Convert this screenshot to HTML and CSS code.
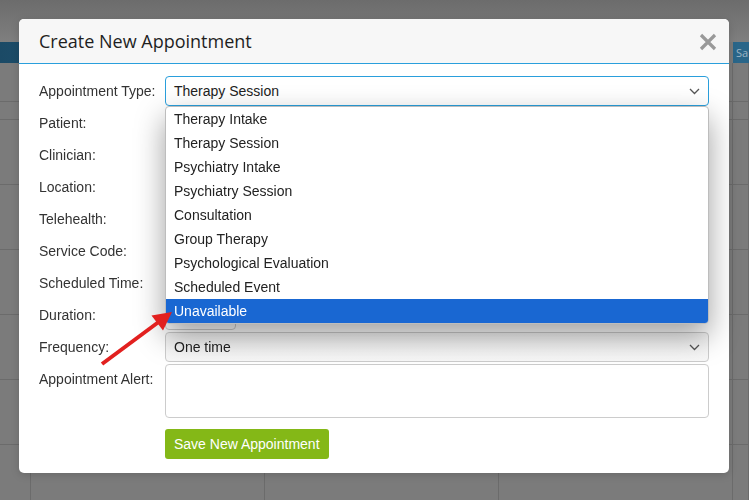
FILE: index.html
```html
<!DOCTYPE html>
<html lang="en">
<head>
<meta charset="utf-8">
<title>Create New Appointment</title>
<link rel="stylesheet" href="styles.css">
</head>
<body>
<div class="page">
  <div class="topbar"></div>
  <div class="toolbar">
    <span class="tb-btn tb-left"></span>
    <span class="tb-gap"></span>
    <span class="tb-btn tb-right">Sa</span>
  </div>
  <div class="calendar">
    <div class="cal-row cal-head"><div class="cell"></div><div class="cell"></div><div class="cell"></div><div class="cell"></div><div class="cell"></div></div>
    <div class="cal-row cal-allday"><div class="cell"></div><div class="cell"></div><div class="cell"></div><div class="cell"></div><div class="cell"></div></div>
    <div class="cal-row"><div class="cell"></div><div class="cell"></div><div class="cell"></div><div class="cell"></div><div class="cell"></div></div>
    <div class="cal-row"><div class="cell"></div><div class="cell"></div><div class="cell"></div><div class="cell"></div><div class="cell"></div></div>
    <div class="cal-row"><div class="cell"></div><div class="cell"></div><div class="cell"></div><div class="cell"></div><div class="cell"></div></div>
    <div class="cal-row"><div class="cell"></div><div class="cell"></div><div class="cell"></div><div class="cell"></div><div class="cell"></div></div>
    <div class="cal-row"><div class="cell"></div><div class="cell"></div><div class="cell"></div><div class="cell"></div><div class="cell"></div></div>
    <div class="cal-row"><div class="cell"></div><div class="cell"></div><div class="cell"></div><div class="cell"></div><div class="cell"></div></div>
  </div>
</div>

<div class="overlay">
  <div class="modal">
    <div class="modal-header">
      <h2 class="modal-title">Create New Appointment</h2>
      <button class="close" type="button" aria-label="Close">
        <svg width="18" height="18" viewBox="0 0 18 18"><path d="M2 2L16 16M16 2L2 16" stroke="#999" stroke-width="3.2" stroke-linecap="butt" fill="none"/></svg>
      </button>
    </div>
    <div class="modal-body">
      <div class="form">
        <div class="label">Appointment Type:</div>
        <div class="control">
          <div class="select focused">
            <span>Therapy Session</span>
            <svg class="chev" width="11" height="7" viewBox="0 0 11 7"><path d="M1 1L5.5 5.5L10 1" stroke="#555" stroke-width="1.3" fill="none"/></svg>
          </div>
          <ul class="dropdown">
            <li>Therapy Intake</li>
            <li>Therapy Session</li>
            <li>Psychiatry Intake</li>
            <li>Psychiatry Session</li>
            <li>Consultation</li>
            <li>Group Therapy</li>
            <li>Psychological Evaluation</li>
            <li>Scheduled Event</li>
            <li class="active">Unavailable</li>
          </ul>
        </div>

        <div class="label">Patient:</div>
        <div class="control"><div class="input patient"></div></div>

        <div class="label">Clinician:</div>
        <div class="control"><div class="input"></div></div>

        <div class="label">Location:</div>
        <div class="control"><div class="input"></div></div>

        <div class="label">Telehealth:</div>
        <div class="control"><div class="input"></div></div>

        <div class="label">Service Code:</div>
        <div class="control"><div class="input"></div></div>

        <div class="label">Scheduled Time:</div>
        <div class="control"><div class="input"></div></div>

        <div class="label">Duration:</div>
        <div class="control"><div class="input short"></div></div>

        <div class="label">Frequency:</div>
        <div class="control">
          <div class="select plain">
            <span>One time</span>
            <svg class="chev" width="11" height="7" viewBox="0 0 11 7"><path d="M1 1L5.5 5.5L10 1" stroke="#555" stroke-width="1.3" fill="none"/></svg>
          </div>
        </div>

        <div class="label">Appointment Alert:</div>
        <div class="control"><div class="textarea"></div></div>

        <div class="label"></div>
        <div class="control"><button class="btn-save" type="button">Save New Appointment</button></div>
      </div>
    </div>
  </div>

  <svg class="arrow" width="749" height="500" viewBox="0 0 749 500">
    <line x1="102" y1="364" x2="160" y2="321" stroke="#e2201f" stroke-width="4"/>
    <polygon points="172,312 151.5,315.5 163,330.5" fill="#e2201f"/>
  </svg>
</div>
</body>
</html>
```

FILE: styles.css
```css
* { box-sizing: border-box; }

html, body {
  margin: 0;
  padding: 0;
  width: 749px;
  height: 500px;
  overflow: hidden;
}

body {
  background: #7b7b7b;
  font-family: "Liberation Sans", Arial, sans-serif;
}

/* ---------- background page (dimmed) ---------- */
.page {
  width: 749px;
  height: 500px;
  overflow: hidden;
}

.topbar {
  height: 42px;
  background: linear-gradient(#6c6c6c, #7f7f7f);
}

.toolbar {
  height: 21px;
  display: grid;
  grid-template-columns: 300px 433px 16px;
  background: #7b7b7b;
}

.tb-btn {
  background: linear-gradient(90deg, #1b4a66, #2a6b8e);
  color: #9db4c4;
  font-family: "Open Sans", sans-serif;
  font-size: 11px;
  line-height: 21px;
  padding-left: 3px;
  white-space: nowrap;
}

.tb-right { background: #2a6689; }

.calendar {
  display: flex;
  flex-direction: column;
}

.cal-row {
  display: grid;
  grid-template-columns: 31px 234px 234px 234px 1fr;
  height: 65px;
  border-bottom: 1px solid #6b6b6b;
}

.cal-head { height: 39px; }
.cal-allday { height: 18px; }

.cell { border-right: 1px solid #6b6b6b; }

/* ---------- modal ---------- */
.overlay {
  position: fixed;
  inset: 0;
  padding: 19px 0 0 19px;
}

.modal {
  width: 710px;
  background: #fff;
  border-radius: 5px;
  box-shadow: 0 2px 8px rgba(0,0,0,0.15);
}

.modal-header {
  height: 45px;
  background: #f7f7f7;
  border-bottom: 1px solid #2a9fdc;
  border-radius: 5px 5px 0 0;
  display: flex;
  align-items: center;
  justify-content: space-between;
  padding: 0 12px 0 20px;
}

.modal-title {
  margin: 0;
  font-family: "Open Sans", sans-serif;
  font-weight: 400;
  font-size: 18px;
  color: #1f1f1f;
}

.close {
  border: 0;
  background: none;
  padding: 0;
  width: 18px;
  height: 18px;
  margin-top: 2px;
  display: block;
}
.close svg { display: block; }

.modal-body {
  padding: 12px 20px 14px 20px;
}

.form {
  display: grid;
  grid-template-columns: 126px 1fr;
  row-gap: 2px;
}

.label {
  font-size: 14px;
  line-height: 30px;
  color: #333;
  white-space: nowrap;
}

.control {
  position: relative;
}

.select, .input {
  height: 30px;
  border: 1px solid #ccc;
  border-radius: 4px;
  background: #fff;
}

.select {
  display: flex;
  align-items: center;
  justify-content: space-between;
  padding: 0 8px;
  font-size: 14px;
  color: #222;
}

.select.focused { border-color: #2a9fdc; }
.select.plain { background: linear-gradient(#f3f3f3, #f8f8f8); }

.chev { display: block; }

.input.patient { border-color: #2a9fdc; }
.input.short { width: 71px; }

.textarea {
  height: 54px;
  border: 1px solid #ccc;
  border-radius: 4px;
  background: #fff;
}

.btn-save {
  margin-top: 9px;
  height: 30px;
  padding: 0 9px;
  border: 0;
  border-radius: 3px;
  background: #84b817;
  color: #fff;
  font-family: "Liberation Sans", Arial, sans-serif;
  font-size: 14px;
}

/* ---------- open dropdown ---------- */
.dropdown {
  position: absolute;
  left: 0;
  right: 0;
  top: 100%;
  margin: 0;
  padding: 0;
  list-style: none;
  background: #fff;
  border: 1px solid #bdbdbd;
  border-radius: 4px;
  box-shadow: 0 12px 30px rgba(0,0,0,0.38);
  z-index: 5;
  overflow: hidden;
}

.dropdown li {
  height: 24px;
  line-height: 24px;
  padding-left: 8px;
  font-size: 14px;
  color: #222;
}

.dropdown li.active {
  background: #1967d2;
  color: #fff;
}

/* ---------- annotation arrow ---------- */
.arrow {
  position: absolute;
  left: 0;
  top: 0;
  z-index: 10;
  pointer-events: none;
}
```
